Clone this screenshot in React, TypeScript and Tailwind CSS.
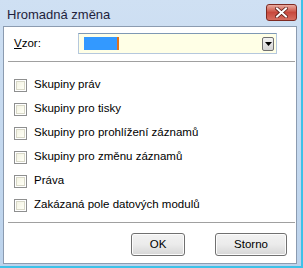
import React from "react";

const items = [
  "Skupiny práv",
  "Skupiny pro tisky",
  "Skupiny pro prohlížení záznamů",
  "Skupiny pro změnu záznamů",
  "Práva",
  "Zakázaná pole datových modulů",
];

function CheckBox() {
  return (
    <div className="w-[13px] h-[13px] border border-[#8e8f8f] bg-white p-[1px] shrink-0">
      <div className="w-full h-full border border-[#d8d8c8] bg-gradient-to-br from-[#f4f4e4] to-[#fffff6]" />
    </div>
  );
}

function WinButton({ label, w }: { label: string; w: string }) {
  return (
    <div
      className={`${w} h-[23px] rounded-[3px] border border-[#707070] bg-gradient-to-b from-[#f2f2f2] via-[#ebebeb] to-[#d6d6d6] flex items-center justify-center text-black shadow-[inset_0_0_0_1px_#fcfcfc]`}
    >
      {label}
    </div>
  );
}

export default function App() {
  return (
    <div
      className="w-[303px] h-[268px] flex bg-gradient-to-b from-[#cfe0f3] to-[#bcd3ec] overflow-hidden"
      style={{ fontFamily: '"Liberation Sans", Arial, sans-serif' }}
    >
      <div className="flex-1 flex flex-col">
        {/* title bar */}
        <div className="h-[26px] flex items-start justify-between pl-[7px] pr-[4px] shrink-0">
          <div className="pt-[8px] text-[13px] leading-[14px] text-[#1e1e3c]">Hromadná změna</div>
          <div className="mt-[4px] w-[31px] h-[17px] rounded-[3px] border border-[#7e2a22] bg-gradient-to-b from-[#e8aba0] via-[#c8493d] to-[#d66d5f] flex items-center justify-center">
            <svg width="13" height="11" viewBox="0 0 13 11">
              <path d="M2 1.5 L11 9.5 M11 1.5 L2 9.5" stroke="#5a1c16" strokeWidth="3.6" strokeLinecap="square" />
              <path d="M2 1.5 L11 9.5 M11 1.5 L2 9.5" stroke="#ffffff" strokeWidth="2" strokeLinecap="square" />
            </svg>
          </div>
        </div>

        {/* content */}
        <div className="flex-1 flex flex-col ml-[3px] mr-[4px] bg-white border border-[#8b9bb0] text-[11.5px] text-black">
          <div className="flex items-center pt-[6px] pl-[10px] pr-[19px]">
            <div className="w-[64px]">
              <span className="underline">V</span>zor:
            </div>
            <div className="flex-1 h-[21px] border border-[#b5c8dd] border-t-[#7e98b4] bg-[#ffffe6] flex items-center pl-[5px] pr-[2px]">
              <div className="w-[35px] h-[13px] bg-[#3399ff] border-r-2 border-[#e0701c]" />
              <div className="flex-1" />
              <div className="w-[12px] h-[14px] rounded-[2px] border border-[#707070] bg-gradient-to-b from-[#f3f3f3] to-[#d4d4d4] flex items-center justify-center">
                <svg width="7" height="4" viewBox="0 0 7 4">
                  <path d="M0 0 L7 0 L3.5 4 Z" fill="#000" />
                </svg>
              </div>
            </div>
          </div>

          <div className="mt-[7px] ml-[4px] mr-[1px] h-px bg-[#a0a0a0]" />

          <div className="mt-[11px] flex flex-col">
            {items.map((t) => (
              <div key={t} className="h-[24px] flex items-center pl-[10px] gap-[7px]">
                <CheckBox />
                <span>{t}</span>
              </div>
            ))}
          </div>

          <div className="mt-[5px] ml-[4px] mr-[1px] h-px bg-[#a0a0a0]" />

          <div className="mt-[10px] flex justify-end gap-[30px] pr-[9px]">
            <WinButton label="OK" w="w-[54px]" />
            <WinButton label="Storno" w="w-[72px]" />
          </div>
        </div>

        {/* bottom frame */}
        <div className="h-[4px] shrink-0 flex flex-col">
          <div className="h-[2px]" />
          <div className="h-[2px] bg-[#3ec1e8]" />
        </div>
      </div>
      <div className="w-[2px] bg-[#3ec1e8]" />
    </div>
  );
}
